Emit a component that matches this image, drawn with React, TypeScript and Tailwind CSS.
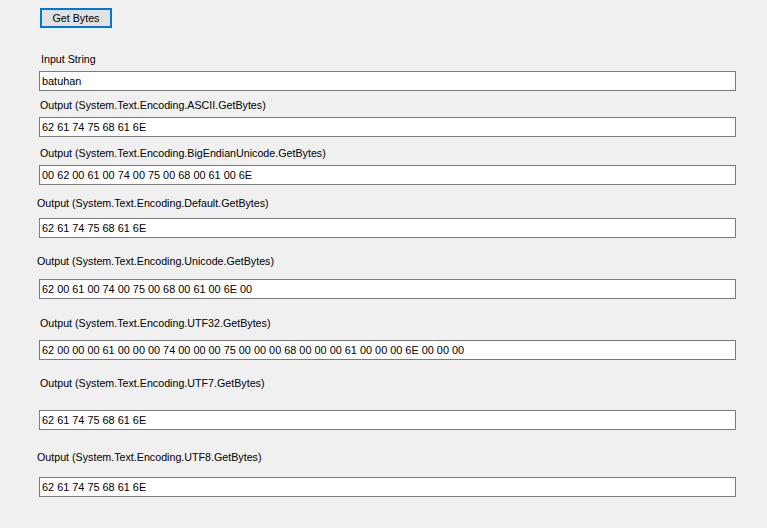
const rows = [
  { label: "Output (System.Text.Encoding.ASCII.GetBytes)", value: "62 61 74 75 68 61 6E", lm: "ml-[40px]", lt: "mt-[7px]", bt: "mt-[6px]" },
  { label: "Output (System.Text.Encoding.BigEndianUnicode.GetBytes)", value: "00 62 00 61 00 74 00 75 00 68 00 61 00 6E", lm: "ml-[40px]", lt: "mt-[9px]", bt: "mt-[6px]" },
  { label: "Output (System.Text.Encoding.Default.GetBytes)", value: "62 61 74 75 68 61 6E", lm: "ml-[37px]", lt: "mt-[11px]", bt: "mt-[9px]" },
  { label: "Output (System.Text.Encoding.Unicode.GetBytes)", value: "62 00 61 00 74 00 75 00 68 00 61 00 6E 00", lm: "ml-[37px]", lt: "mt-[16px]", bt: "mt-[12px]" },
  { label: "Output (System.Text.Encoding.UTF32.GetBytes)", value: "62 00 00 00 61 00 00 00 74 00 00 00 75 00 00 00 68 00 00 00 61 00 00 00 6E 00 00 00", lm: "ml-[40px]", lt: "mt-[17px]", bt: "mt-[11px]" },
  { label: "Output (System.Text.Encoding.UTF7.GetBytes)", value: "62 61 74 75 68 61 6E", lm: "ml-[40px]", lt: "mt-[16px]", bt: "mt-[21px]" },
  { label: "Output (System.Text.Encoding.UTF8.GetBytes)", value: "62 61 74 75 68 61 6E", lm: "ml-[37px]", lt: "mt-[20px]", bt: "mt-[14px]" },
];

const Box = ({ value, className }: { value: string; className: string }) => (
  <div className={`ml-[39px] w-[697px] h-[20px] bg-white border border-[#7a7a7a] pl-[2px] text-[10.9px] leading-[18px] ${className}`}>
    {value}
  </div>
);

const App = () => {
  return (
    <div className="w-[767px] h-[528px] bg-[#f0f0f0] text-black text-[10.7px] font-['Liberation_Sans',Arial,sans-serif] flex flex-col pt-[8px] overflow-hidden">
      <button className="ml-[40px] w-[72px] h-[20px] bg-[#e1e1e1] border-2 border-[#0078d7] leading-[16px] text-center">
        Get Bytes
      </button>
      <div className="ml-[41px] mt-[24px] h-[13px] leading-[15px]">Input String</div>
      <Box value="batuhan" className="mt-[6px]" />
      {rows.map((r) => (
        <div key={r.label} className="flex flex-col">
          <div className={`${r.lm} ${r.lt} h-[13px] leading-[15px]`}>{r.label}</div>
          <Box value={r.value} className={r.bt} />
        </div>
      ))}
    </div>
  );
};

export default App;
